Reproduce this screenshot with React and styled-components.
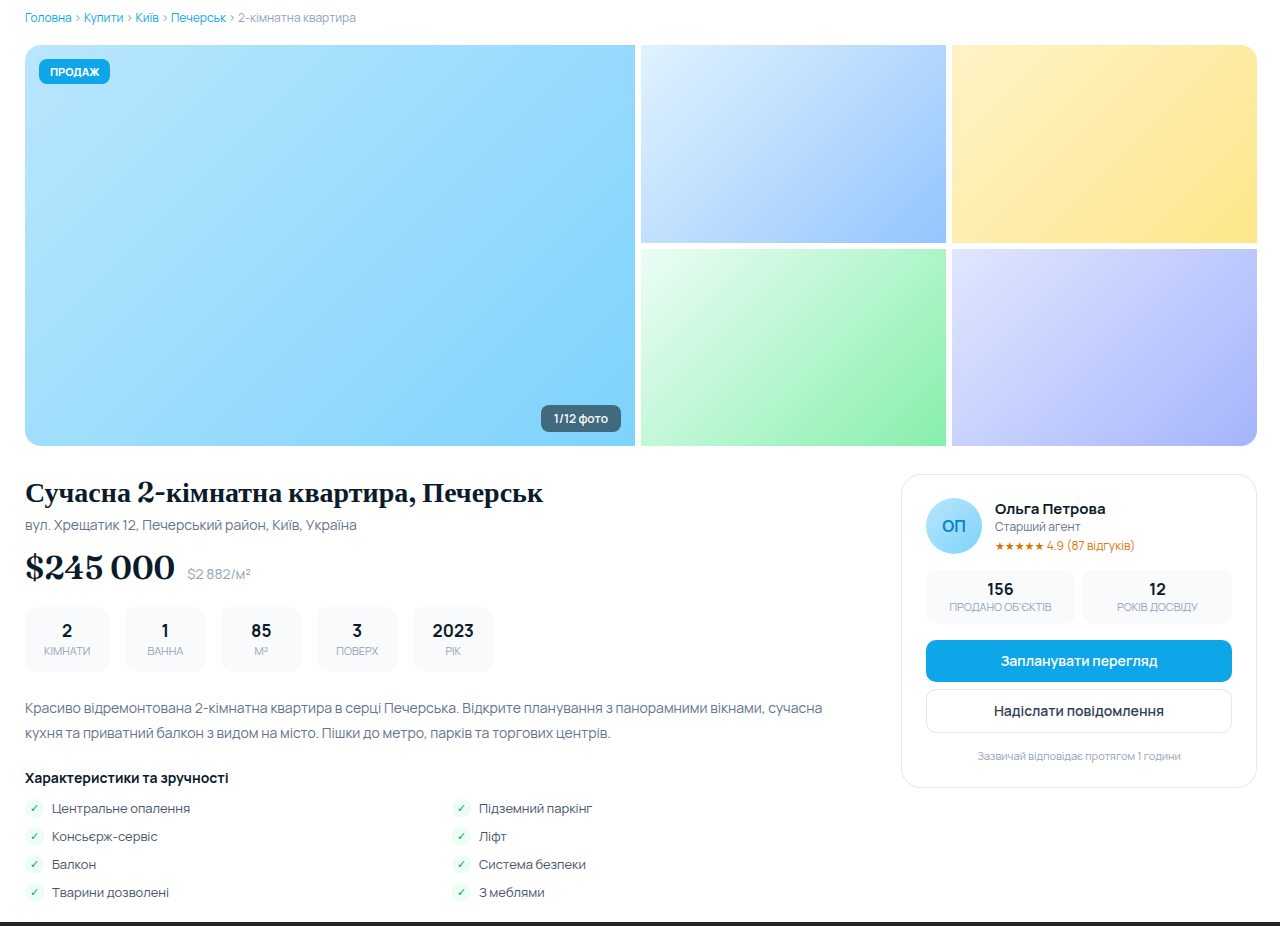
import React from 'react';
import styled, { createGlobalStyle } from 'styled-components';

const crumbs = ['Головна', 'Купити', 'Київ', 'Печерськ'];

const photos = [
  ['#e0f2fe', '#93c5fd'],
  ['#fef3c7', '#fde68a'],
  ['#ecfdf5', '#86efac'],
  ['#e0e7ff', '#a5b4fc'],
];

const specs = [
  { value: '2', label: 'Кімнати' },
  { value: '1', label: 'Ванна' },
  { value: '85', label: 'м²' },
  { value: '3', label: 'Поверх' },
  { value: '2023', label: 'Рік' },
];

const features = [
  'Центральне опалення',
  'Підземний паркінг',
  'Консьєрж-сервіс',
  'Ліфт',
  'Балкон',
  'Система безпеки',
  'Тварини дозволені',
  'З меблями',
];

const agentStats = [
  { value: '156', label: "Продано об'єктів" },
  { value: '12', label: 'Років досвіду' },
];

const App = () => {
  return (
    <>
      <GlobalStyle />
      <Page>
        <Breadcrumbs aria-label="Навігація">
          {crumbs.map(name => (
            <React.Fragment key={name}>
              <a href="#">{name}</a> ›{' '}
            </React.Fragment>
          ))}
          <span>2-кімнатна квартира</span>
        </Breadcrumbs>

        <Gallery>
          <MainPhoto $from="#bae6fd" $to="#7dd3fc">
            <SaleBadge>Продаж</SaleBadge>
            <PhotoCount>1/12 фото</PhotoCount>
          </MainPhoto>
          {photos.map(([from, to]) => (
            <Photo key={from} $from={from} $to={to} />
          ))}
        </Gallery>

        <Content>
          <Details>
            <Title>Сучасна 2-кімнатна квартира, Печерськ</Title>
            <Address>вул. Хрещатик 12, Печерський район, Київ, Україна</Address>
            <PriceRow>
              <Price>$245 000</Price>
              <PricePerMeter>$2 882/м²</PricePerMeter>
            </PriceRow>

            <Specs>
              {specs.map(spec => (
                <Spec key={spec.label}>
                  <SpecValue>{spec.value}</SpecValue>
                  <StatLabel>{spec.label}</StatLabel>
                </Spec>
              ))}
            </Specs>

            <Description>
              Красиво відремонтована 2-кімнатна квартира в серці Печерська. Відкрите
              планування з панорамними вікнами, сучасна кухня та приватний балкон з
              видом на місто. Пішки до метро, парків та торгових центрів.
            </Description>

            <SectionTitle>Характеристики та зручності</SectionTitle>
            <FeatureList>
              {features.map(name => (
                <Feature key={name}>
                  <Check>✓</Check>
                  {name}
                </Feature>
              ))}
            </FeatureList>
          </Details>

          <AgentCard>
            <AgentHeader>
              <Avatar>ОП</Avatar>
              <div>
                <AgentName>Ольга Петрова</AgentName>
                <AgentRole>Старший агент</AgentRole>
                <Rating>
                  <Stars>★★★★★</Stars> 4.9 (87 відгуків)
                </Rating>
              </div>
            </AgentHeader>
            <AgentStats>
              {agentStats.map(stat => (
                <AgentStat key={stat.label}>
                  <AgentValue>{stat.value}</AgentValue>
                  <StatLabel>{stat.label}</StatLabel>
                </AgentStat>
              ))}
            </AgentStats>
            <Actions>
              <Button type="button" $primary>Запланувати перегляд</Button>
              <Button type="button">Надіслати повідомлення</Button>
            </Actions>
            <ResponseNote>Зазвичай відповідає протягом 1 години</ResponseNote>
          </AgentCard>
        </Content>
      </Page>
      <Footer />
    </>
  );
};

const GlobalStyle = createGlobalStyle`
  * {
    box-sizing: border-box;
  }

  body {
    margin: 0;
    background: #fff;
    color: #0c1b2a;
    font-family: Manrope, Inter, "Liberation Sans", sans-serif;
  }
`;

const Page = styled.main`
  padding: 0 23px 20px 25px;
`;

const Breadcrumbs = styled.nav`
  padding: 10px 0 19px;
  font-size: 12px;
  line-height: 16px;
  color: #94a3b8;

  a {
    color: #0ea5e9;
    text-decoration: none;
  }
`;

const Gallery = styled.div`
  display: grid;
  grid-template-columns: 2fr 1fr 1fr;
  grid-template-rows: 1fr 1fr;
  gap: 6px;
  height: 401px;
  border-radius: 16px;
  overflow: hidden;
`;

const Photo = styled.div`
  background: linear-gradient(135deg, ${props => props.$from}, ${props => props.$to});
`;

const MainPhoto = styled(Photo)`
  grid-row: span 2;
  position: relative;
`;

const SaleBadge = styled.span`
  position: absolute;
  top: 14px;
  left: 14px;
  padding: 4px 11px;
  border-radius: 8px;
  background: #0ea5e9;
  color: #fff;
  font-size: 11px;
  font-weight: 800;
  line-height: 17px;
  text-transform: uppercase;
`;

const PhotoCount = styled.span`
  position: absolute;
  right: 14px;
  bottom: 14px;
  padding: 5px 13px;
  border-radius: 8px;
  background: rgba(0, 0, 0, 0.5);
  color: #fff;
  font-size: 12px;
  font-weight: 600;
  line-height: 17px;
`;

const Content = styled.div`
  display: grid;
  grid-template-columns: 1fr 356px;
  align-items: start;
  gap: 32px;
  margin-top: 28px;
`;

const Details = styled.section`
  min-width: 0;
`;

const Title = styled.h1`
  margin: 0;
  font-family: Fraunces, "Liberation Serif", serif;
  font-size: 28px;
  font-weight: 600;
  line-height: 36px;
`;

const Address = styled.p`
  margin: 5px 0 0;
  font-size: 14px;
  line-height: 20px;
  color: #64748b;
`;

const PriceRow = styled.div`
  display: flex;
  align-items: baseline;
  gap: 12px;
  margin-top: 11px;
`;

const Price = styled.span`
  font-family: Fraunces, "Liberation Serif", serif;
  font-size: 32px;
  font-weight: 600;
  line-height: 44px;
`;

const PricePerMeter = styled.span`
  font-size: 14px;
  color: #94a3b8;
`;

const Specs = styled.div`
  display: flex;
  flex-wrap: wrap;
  gap: 16px;
  margin-top: 17px;
`;

const Spec = styled.div`
  min-width: 80px;
  padding: 12px 19px 13px;
  border-radius: 12px;
  background: #f8fafc;
  text-align: center;
`;

const SpecValue = styled.div`
  font-size: 17px;
  font-weight: 700;
  line-height: 24px;
`;

const StatLabel = styled.div`
  font-size: 11px;
  line-height: 16px;
  color: #94a3b8;
  text-transform: uppercase;
`;

const Description = styled.p`
  margin: 23px 0 0;
  padding-right: 20px;
  font-size: 14px;
  line-height: 25px;
  color: #64748b;
`;

const SectionTitle = styled.h2`
  margin: 22px 0 10px;
  font-size: 14px;
  font-weight: 700;
  line-height: 21px;
`;

const FeatureList = styled.ul`
  display: grid;
  grid-template-columns: 1fr 1fr;
  gap: 8px 10px;
  margin: 0;
  padding: 0;
  list-style: none;
`;

const Feature = styled.li`
  display: flex;
  align-items: center;
  gap: 8px;
  font-size: 13px;
  line-height: 20px;
  color: #475569;
`;

const Check = styled.span`
  width: 19px;
  height: 19px;
  border-radius: 50%;
  background: #ecfdf5;
  color: #16a34a;
  font-family: "DejaVu Sans", sans-serif;
  font-size: 11px;
  font-weight: 700;
  line-height: 19px;
  text-align: center;
`;

const AgentCard = styled.aside`
  padding: 23px 24px;
  border: 1px solid #e2e8f0;
  border-radius: 20px;
`;

const AgentHeader = styled.div`
  display: flex;
  align-items: center;
  gap: 13px;
`;

const Avatar = styled.div`
  display: flex;
  align-items: center;
  justify-content: center;
  width: 56px;
  height: 56px;
  border-radius: 50%;
  background: linear-gradient(135deg, #bae6fd, #7dd3fc);
  color: #0284c7;
  font-size: 16px;
  font-weight: 700;
`;

const AgentName = styled.div`
  font-size: 15px;
  font-weight: 700;
  line-height: 20px;
`;

const AgentRole = styled.div`
  font-size: 12px;
  line-height: 16px;
  color: #64748b;
`;

const Rating = styled.div`
  margin-top: 3px;
  font-size: 12px;
  line-height: 16px;
  color: #d97706;
`;

const Stars = styled.span`
  font-family: "DejaVu Sans", sans-serif;
  font-size: 11px;
  line-height: 1;
`;

const AgentStats = styled.div`
  display: grid;
  grid-template-columns: 1fr 1fr;
  gap: 8px;
  margin: 16px 0;
`;

const AgentStat = styled.div`
  padding: 9px 8px;
  border-radius: 10px;
  background: #f8fafc;
  text-align: center;
`;

const AgentValue = styled.div`
  font-size: 16px;
  font-weight: 700;
  line-height: 20px;
`;

const Actions = styled.div`
  display: grid;
  gap: 7px;
`;

const Button = styled.button`
  padding: 11px 16px;
  border: ${props => props.$primary ? 'none' : '1px solid #e2e8f0'};
  border-radius: 10px;
  background: ${props => props.$primary ? '#0ea5e9' : '#fff'};
  color: ${props => props.$primary ? '#fff' : '#334155'};
  font-family: inherit;
  font-size: 14px;
  font-weight: 600;
  line-height: 20px;
  cursor: pointer;
`;

const ResponseNote = styled.p`
  margin: 15px 0 0;
  font-size: 11px;
  line-height: 16px;
  color: #94a3b8;
  text-align: center;
`;

const Footer = styled.footer`
  height: 4px;
  background: #292524;
`;

export default App;
